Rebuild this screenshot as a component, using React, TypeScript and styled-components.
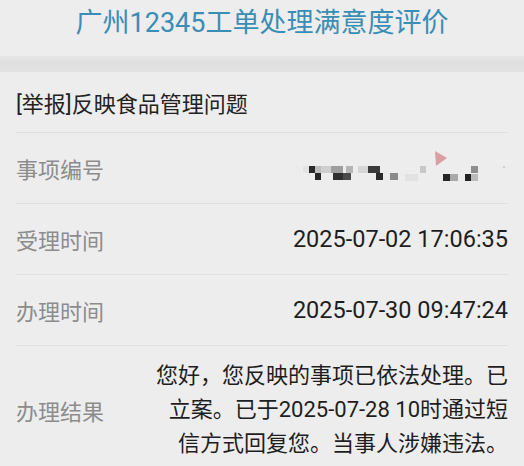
import styled, { createGlobalStyle } from "styled-components";

const GlobalStyle = createGlobalStyle`
  html, body {
    margin: 0;
    padding: 0;
    background: #ededed;
  }
  body {
    font-family: Roboto, "Noto Sans CJK SC", sans-serif;
  }
`;

const Page = styled.div`
  width: 524px;
  height: 466px;
  overflow: hidden;
  background: #ededed;
  display: flex;
  flex-direction: column;
  & > * {
    flex-shrink: 0;
  }
`;

const Header = styled.header`
  height: 56px;
  display: flex;
  justify-content: center;
  align-items: flex-start;
`;

const Title = styled.h1`
  margin: 0;
  padding-top: 4px;
  font-size: 27px;
  font-weight: 400;
  line-height: 38px;
  color: #3a8db5;
  letter-spacing: 0;
`;

const Band = styled.div`
  height: 16px;
  background: linear-gradient(#e6e6e6, #dedede 50%, #e4e4e4);
`;

const Card = styled.section`
  padding: 0 16px;
  display: flex;
  flex-direction: column;
  & > * {
    flex-shrink: 0;
  }
`;

const Subject = styled.div`
  height: 60px;
  display: flex;
  align-items: center;
  font-size: 22px;
  color: #222;
  border-bottom: 1px solid #e0e0e0;
`;

const Row = styled.div<{ $tall?: boolean }>`
  display: flex;
  justify-content: space-between;
  align-items: center;
  min-height: ${(p) => (p.$tall ? "auto" : "70px")};
  padding: ${(p) => (p.$tall ? "13px 0" : "0")};
  border-bottom: 1px solid #e0e0e0;
`;

const Label = styled.span`
  font-size: 22px;
  color: #8c8c8c;
  flex-shrink: 0;
`;

const Value = styled.span`
  font-size: 23.5px;
  color: #1e1e1e;
`;

const ResultText = styled.p`
  margin: 0;
  width: 356px;
  font-size: 22px;
  line-height: 34px;
  text-align: right;
  color: #1e1e1e;
`;

const cells: [number, number, number, number, string][] = [
  [296, 160, 6, 7, "#ececec"],
  [305, 160, 6, 7, "#e4e4e4"],
  [311, 160, 6, 7, "#2a2a2a"],
  [317, 160, 6, 7, "#bdbdbd"],
  [323, 160, 10, 7, "#cfcfcf"],
  [333, 160, 12, 7, "#9e9e9e"],
  [348, 160, 7, 7, "#b5b5b5"],
  [360, 160, 10, 7, "#d6d6d6"],
  [370, 160, 12, 7, "#3a3a3a"],
  [317, 167, 6, 7, "#262626"],
  [335, 167, 10, 7, "#2e2e2e"],
  [345, 167, 8, 7, "#4a4a4a"],
  [378, 167, 7, 7, "#2b2b2b"],
  [392, 167, 8, 7, "#8a8a8a"],
  [407, 168, 13, 7, "#e2e2e2"],
  [422, 160, 6, 7, "#c8c8c8"],
  [445, 168, 7, 7, "#262626"],
  [452, 168, 8, 7, "#a8a8a8"],
  [467, 168, 6, 7, "#222"],
  [473, 168, 7, 7, "#bcbcbc"],
  [473, 160, 7, 7, "#8e8e8e"],
];

function Mosaic() {
  // blurred ticket number, drawn as pixel blocks
  const ox = 290;
  const oy = 140;
  return (
    <svg width="220" height="44" viewBox="0 0 220 44">
      {cells.map(([x, y, w, h, c], i) => (
        <rect key={i} x={x - ox} y={y - oy} width={w} height={h} fill={c} />
      ))}
      <polygon points="147,5 159,12 148,20" fill="#d99fa4" />
      <rect x="215" y="20" width="2" height="2" fill="#d0d0d0" />
    </svg>
  );
}

export default function App() {
  return (
    <>
      <GlobalStyle />
      <Page>
        <Header>
          <Title>广州12345工单处理满意度评价</Title>
        </Header>
        <Band />
        <Card>
          <Subject>[举报]反映食品管理问题</Subject>
          <Row>
            <Label>事项编号</Label>
            <Mosaic />
          </Row>
          <Row>
            <Label>受理时间</Label>
            <Value>2025-07-02 17:06:35</Value>
          </Row>
          <Row>
            <Label>办理时间</Label>
            <Value>2025-07-30 09:47:24</Value>
          </Row>
          <Row $tall>
            <Label>办理结果</Label>
            <ResultText>
              您好，您反映的事项已依法处理。已立案。已于2025-07-28 10时通过短信方式回复您。当事人涉嫌违法。
            </ResultText>
          </Row>
        </Card>
      </Page>
    </>
  );
}
